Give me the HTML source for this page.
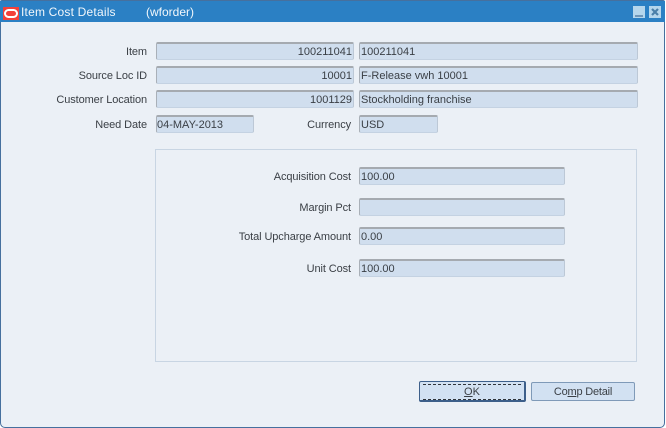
<!DOCTYPE html>
<html><head><meta charset="utf-8">
<style>
html,body{margin:0;padding:0;width:666px;height:428px;overflow:hidden;background:#fff}
body{position:relative;font-family:"Liberation Sans",sans-serif;font-size:11px;color:#3a3f45}
#win{position:absolute;left:0;top:0;width:665px;height:428px;box-sizing:border-box;background:#ebf0f6;border:1px solid #46709e;border-radius:2px 2px 5px 5px}
#bar{position:absolute;left:0;top:1px;right:1px;height:21px;background:#2b80c4}
.t{position:absolute;color:#f2f7fb;font-size:12px;line-height:14px;top:5px;white-space:nowrap;letter-spacing:.2px}
.l{position:absolute;text-align:right;white-space:nowrap;line-height:13px;height:13px;letter-spacing:-.1px;margin-top:1px}
.f{position:absolute;box-sizing:border-box;height:18px;background:#d0deee;border-top:2px solid #a5aab0;border-left:1px solid #a9b0b8;border-right:1px solid #bcc8d6;border-bottom:1px solid #c4d2e2;line-height:17px;padding:0 1px;white-space:nowrap;border-radius:2px;color:#3a3f45}
.r{text-align:right;padding-right:1px}
#panel{position:absolute;left:155px;top:149px;width:482px;height:213px;box-sizing:border-box;border:1px solid #c8d5e3}
.b{position:absolute;box-sizing:border-box;text-align:center;background:#d2e1f2;border-radius:2px;color:#3a3f45}
u{text-underline-offset:1px}
</style></head>
<body>
<div id="win"></div>
<div id="bar"></div>
<svg style="position:absolute;left:3px;top:7px" width="17" height="13"><rect width="16" height="13" fill="#f4403a"/><rect x="2" y="3" width="12" height="7" rx="3.5" fill="none" stroke="#fff" stroke-width="2"/></svg>
<div class="t" style="left:21px">Item Cost Details</div>
<div class="t" style="left:146px;letter-spacing:0">(wforder)</div>
<svg style="position:absolute;left:633px;top:6px" width="29" height="12">
<rect x="0" y="0" width="12" height="12" fill="#b5d6ec"/><rect x="2" y="9" width="8" height="2" fill="#6f96b8"/>
<rect x="16" y="0" width="12" height="12" fill="#b5d6ec"/><path d="M19 3 L25 9 M25 3 L19 9" stroke="#4a7fa9" stroke-width="2.2"/>
</svg>

<div class="l" style="right:519px;top:45px">Item</div>
<div class="f r" style="left:156px;top:42px;width:198px">100211041</div>
<div class="f" style="left:359px;top:42px;width:279px">100211041</div>

<div class="l" style="right:519px;top:69px">Source Loc ID</div>
<div class="f r" style="left:156px;top:66px;width:198px">10001</div>
<div class="f" style="left:359px;top:66px;width:279px">F-Release vwh 10001</div>

<div class="l" style="right:519px;top:93px">Customer Location</div>
<div class="f r" style="left:156px;top:90px;width:198px">1001129</div>
<div class="f" style="left:359px;top:90px;width:279px">Stockholding franchise</div>

<div class="l" style="right:519px;top:118px">Need Date</div>
<div class="f" style="left:156px;top:115px;width:98px;height:18px;padding-left:0">04-MAY-2013</div>
<div class="l" style="right:315px;top:118px">Currency</div>
<div class="f" style="left:359px;top:115px;width:79px;height:18px">USD</div>

<div id="panel"></div>

<div class="l" style="right:315px;top:170px">Acquisition Cost</div>
<div class="f" style="left:359px;top:167px;width:206px">100.00</div>
<div class="l" style="right:315px;top:201px">Margin Pct</div>
<div class="f" style="left:359px;top:198px;width:206px"></div>
<div class="l" style="right:315px;top:230px">Total Upcharge Amount</div>
<div class="f" style="left:359px;top:227px;width:206px">0.00</div>
<div class="l" style="right:315px;top:262px">Unit Cost</div>
<div class="f" style="left:359px;top:259px;width:206px">100.00</div>

<div class="b" style="left:419px;top:381px;width:107px;height:21px;border:1px solid #3d5f8a;border-right-width:2px;border-bottom-width:2px;padding:2px 3px 1px 3px"><div style="border-top:1px dashed #30353b;border-bottom:1px dashed #30353b;height:16px;line-height:15px;box-sizing:border-box"><u>O</u>K</div></div>
<div class="b" style="left:531px;top:382px;width:104px;height:19px;border:1px solid #7f9ab8;line-height:18px;letter-spacing:-.2px">Co<u>m</u>p Detail</div>
</body></html>
